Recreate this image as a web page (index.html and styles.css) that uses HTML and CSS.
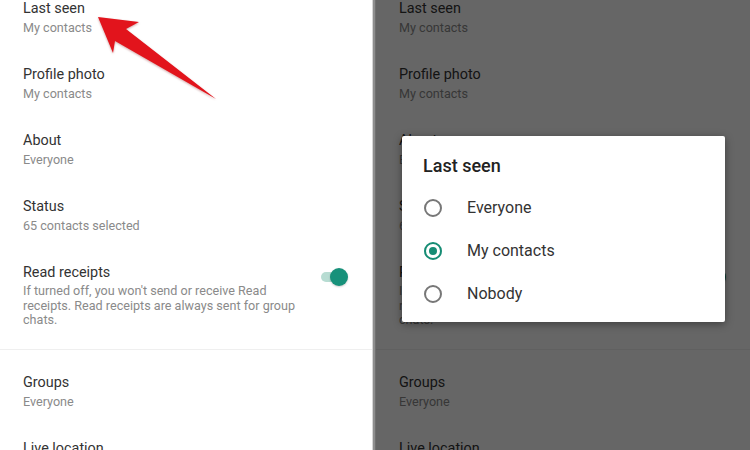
FILE: index.html
```html
<!DOCTYPE html>
<html lang="en">
<head>
<meta charset="utf-8">
<title>Privacy settings</title>
<link rel="stylesheet" href="styles.css">
</head>
<body>
<div class="screen">
  <section class="pane pane-left">
    <div class="list">
      <div class="item"><div class="item-title">Last seen</div><div class="item-sub">My contacts</div></div>
      <div class="item"><div class="item-title">Profile photo</div><div class="item-sub">My contacts</div></div>
      <div class="item"><div class="item-title">About</div><div class="item-sub">Everyone</div></div>
      <div class="item"><div class="item-title">Status</div><div class="item-sub">65 contacts selected</div></div>
      <div class="item item-switch">
        <div class="item-text">
          <div class="item-title">Read receipts</div>
          <div class="item-desc">If turned off, you won't send or receive Read<br>receipts. Read receipts are always sent for group<br>chats.</div>
        </div>
        <div class="switch"></div>
      </div>
      <div class="item item-after-divider"><div class="item-title">Groups</div><div class="item-sub">Everyone</div></div>
      <div class="item"><div class="item-title">Live location</div><div class="item-sub">None</div></div>
    </div>
    <svg class="arrow" viewBox="0 0 372 450" width="372" height="450" aria-hidden="true">
      <polygon points="98,17 139,22 126,29 216,99 115,41 113,53" fill="#e2141c"/>
    </svg>
  </section>
  <div class="sep"></div>
  <section class="pane pane-right">
    <div class="list">
      <div class="item"><div class="item-title">Last seen</div><div class="item-sub">My contacts</div></div>
      <div class="item"><div class="item-title">Profile photo</div><div class="item-sub">My contacts</div></div>
      <div class="item"><div class="item-title">About</div><div class="item-sub">Everyone</div></div>
      <div class="item"><div class="item-title">Status</div><div class="item-sub">65 contacts selected</div></div>
      <div class="item item-switch">
        <div class="item-text">
          <div class="item-title">Read receipts</div>
          <div class="item-desc">If turned off, you won't send or receive Read<br>receipts. Read receipts are always sent for group<br>chats.</div>
        </div>
        <div class="switch"></div>
      </div>
      <div class="item item-after-divider"><div class="item-title">Groups</div><div class="item-sub">Everyone</div></div>
      <div class="item"><div class="item-title">Live location</div><div class="item-sub">None</div></div>
    </div>
    <div class="scrim"></div>
    <div class="dialog">
      <div class="dialog-title">Last seen</div>
      <div class="option"><span class="radio"></span><span class="option-label">Everyone</span></div>
      <div class="option"><span class="radio checked"></span><span class="option-label">My contacts</span></div>
      <div class="option"><span class="radio"></span><span class="option-label">Nobody</span></div>
    </div>
  </section>
</div>
</body>
</html>
```

FILE: styles.css
```css
html, body {
  margin: 0;
  padding: 0;
  background: #fff;
}

body {
  font-family: Roboto, "Noto Sans", "Liberation Sans", sans-serif;
}

.screen {
  display: flex;
  width: 750px;
  height: 450px;
  overflow: hidden;
}

.pane {
  position: relative;
  background: #fff;
  overflow: hidden;
}

.pane-left {
  width: 372px;
  flex: none;
}

.pane-right {
  flex: 1;
}

.sep {
  width: 4px;
  flex: none;
  background: linear-gradient(to right, #d6d6d6 0 1px, #8e8e8e 1px 3px, #707070 3px 4px);
}

.list {
  padding: 0 24px 0 23px;
}

.item {
  padding-bottom: 30px;
}

.item-title {
  font-size: 14.4px;
  line-height: 17px;
  color: #333;
}

.item-sub {
  margin-top: 2px;
  font-size: 12.6px;
  line-height: 17px;
  color: #8a8a8a;
}

.item-switch {
  display: flex;
  justify-content: space-between;
  align-items: flex-start;
  padding-bottom: 21px;
  border-bottom: 1px solid #efefef;
  margin: 0 -24px 0 -23px;
  padding-left: 23px;
  padding-right: 24px;
}

.item-desc {
  margin-top: 3px;
  font-size: 12.6px;
  line-height: 14.5px;
  color: #8a8a8a;
}

.item-after-divider {
  padding-top: 24px;
}

.switch {
  position: relative;
  flex: none;
  width: 27px;
  height: 18px;
  margin-top: 4px;
}

.switch::before {
  content: "";
  position: absolute;
  left: 0;
  top: 4px;
  width: 24px;
  height: 10px;
  border-radius: 5px;
  background: #b7dcd2;
}

.switch::after {
  content: "";
  position: absolute;
  right: 0;
  top: 0;
  width: 18px;
  height: 18px;
  border-radius: 50%;
  background: #17917a;
  box-shadow: 0 1px 2px rgba(0, 0, 0, 0.2);
}

.arrow {
  position: absolute;
  left: 0;
  top: 0;
  pointer-events: none;
  filter: drop-shadow(0 1px 1px rgba(120, 0, 0, 0.35));
}

.scrim {
  position: absolute;
  inset: 0;
  background: rgba(0, 0, 0, 0.6);
}

.dialog {
  position: absolute;
  left: 26px;
  top: 136px;
  width: 323px;
  padding: 20px 0 7px;
  background: #fff;
  border-radius: 2px;
  box-shadow: 0 2px 8px rgba(0, 0, 0, 0.4);
}

.dialog-title {
  font-size: 18px;
  font-weight: 500;
  line-height: 20px;
  color: #222;
  padding-left: 21px;
  margin-bottom: 10px;
}

.option {
  display: flex;
  align-items: center;
  height: 43px;
  padding-left: 22px;
}

.radio {
  display: flex;
  align-items: center;
  justify-content: center;
  box-sizing: border-box;
  width: 18px;
  height: 18px;
  border: 2px solid #777;
  border-radius: 50%;
  margin-right: 25px;
  flex: none;
}

.radio.checked {
  border-color: #168c74;
}

.radio.checked::after {
  content: "";
  width: 8px;
  height: 8px;
  border-radius: 50%;
  background: #168c74;
}

.option-label {
  font-size: 16px;
  color: #333;
}
```
